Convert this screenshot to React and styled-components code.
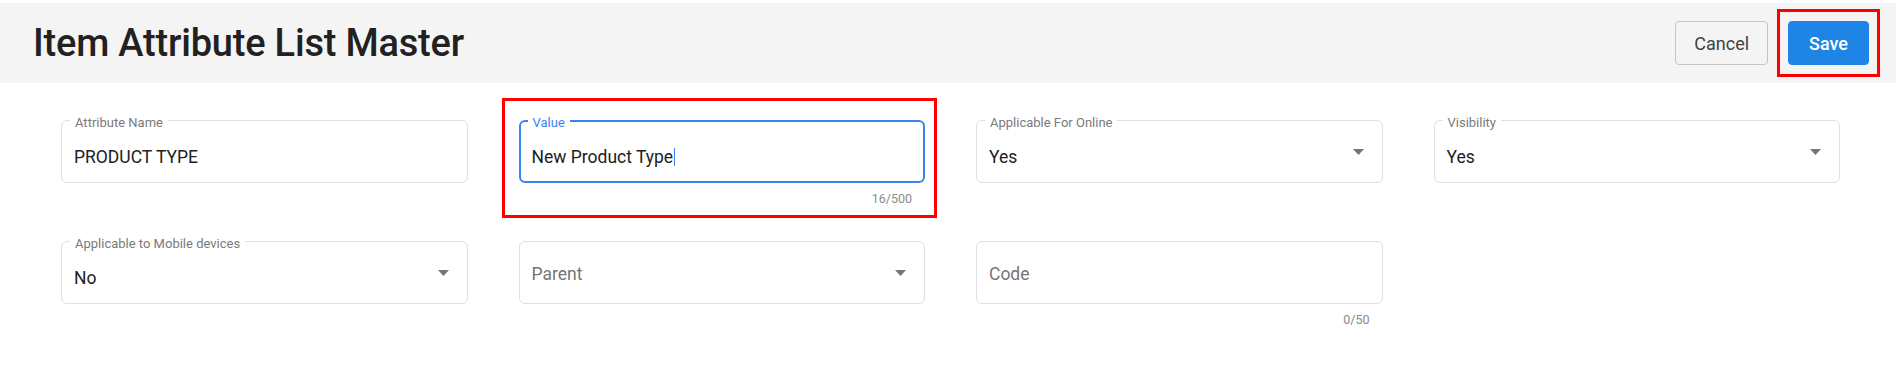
import React from "react";
import styled, { createGlobalStyle, css } from "styled-components";

const GlobalStyle = createGlobalStyle`
  body {
    margin: 0;
    background: #ffffff;
    font-family: Roboto, "Liberation Sans", sans-serif;
    color: #212121;
  }
`;

const Page = styled.div`
  padding-top: 3px;
`;

const Header = styled.header`
  height: 80px;
  background-color: #f4f4f4;
  display: flex;
  align-items: center;
  justify-content: space-between;
  padding: 0 27px 0 33px;
`;

const Title = styled.h1`
  margin: 0;
  font-size: 38px;
  font-weight: 500;
  color: #212121;
  letter-spacing: -0.2px;
`;

const Actions = styled.div`
  display: flex;
  align-items: center;
  gap: 20px;
`;

const Button = styled.button`
  font-family: Roboto, "Liberation Sans", sans-serif;
  font-size: 18px;
  height: 44px;
  border-radius: 4px;
  cursor: pointer;
  ${(p) =>
    p.$primary
      ? css`
          background-color: #1e85e6;
          border: 1px solid #1e85e6;
          color: #ffffff;
          font-weight: 500;
          padding: 0 20px;
        `
      : css`
          background-color: #f4f4f4;
          border: 1px solid #c4c4c4;
          color: #424242;
          padding: 0 18px;
        `}
`;

const Marked = styled.div`
  position: relative;
  display: flex;
`;

const RedFrame = styled.div`
  position: absolute;
  top: ${(p) => p.$top}px;
  right: ${(p) => p.$right}px;
  bottom: ${(p) => p.$bottom}px;
  left: ${(p) => p.$left}px;
  border: 3px solid #ff0000;
  pointer-events: none;
`;

const Form = styled.div`
  display: grid;
  grid-template-columns: repeat(4, 1fr);
  column-gap: 51px;
  row-gap: 34px;
  padding: 37px 56px 0 61px;
`;

const Field = styled.div`
  position: relative;
`;

const Box = styled.div`
  position: relative;
  height: 63px;
  box-sizing: border-box;
  border-radius: 6px;
  display: flex;
  align-items: ${(p) => (p.$empty ? "center" : "flex-start")};
  border: 1px solid #e0e0e0;
  padding: ${(p) => (p.$empty ? "3px 13px 0 12px" : "26px 13px 0 12px")};
  ${(p) =>
    p.$focused &&
    css`
      border: 2px solid #3b82f6;
      padding: 25px 12px 0 11px;
    `}
`;

const Label = styled.span`
  position: absolute;
  top: ${(p) => (p.$focused ? -7 : -6)}px;
  left: ${(p) => (p.$focused ? 7 : 8)}px;
  padding: 0 5px;
  background: #ffffff;
  font-size: 13px;
  line-height: 15px;
  color: ${(p) => (p.$focused ? "#3b82f6" : "#7a7a7a")};
  white-space: nowrap;
`;

const Value = styled.span`
  flex: 1;
  font-size: 17.5px;
  line-height: 20px;
  color: ${(p) => (p.$placeholder ? "#757575" : "#212121")};
  white-space: nowrap;
`;

const Caret = styled.span`
  display: inline-block;
  width: 1px;
  height: 18px;
  margin-left: 1px;
  background: #3b82f6;
  vertical-align: -3px;
`;

const Arrow = styled.svg`
  width: 11px;
  height: 6px;
  margin-right: 5px;
  align-self: center;
  margin-top: ${(p) => (p.$empty ? "-3px" : "-26px")};
  fill: #757575;
  flex-shrink: 0;
`;

const Helper = styled.div`
  height: 24px;
  box-sizing: border-box;
  padding: 8px 13px 0 0;
  text-align: right;
  font-size: 12.5px;
  line-height: 16px;
  color: #8a8a8a;
`;

function DropArrow({ empty }) {
  return (
    <Arrow viewBox="0 0 11 6" $empty={empty}>
      <polygon points="0,0 11,0 5.5,6" />
    </Arrow>
  );
}

function TextField({ label, value, focused, max }) {
  const empty = !value;
  return (
    <Field>
      <Box $focused={focused} $empty={empty}>
        {!empty && <Label $focused={focused}>{label}</Label>}
        <Value $placeholder={empty}>
          {empty ? label : value}
          {focused && <Caret />}
        </Value>
      </Box>
      {max && (
        <Helper>
          {(value || "").length}/{max}
        </Helper>
      )}
    </Field>
  );
}

function SelectField({ label, value }) {
  const empty = !value;
  return (
    <Field>
      <Box $empty={empty}>
        {!empty && <Label>{label}</Label>}
        <Value $placeholder={empty}>{empty ? label : value}</Value>
        <DropArrow empty={empty} />
      </Box>
    </Field>
  );
}

export default function App() {
  return (
    <Page>
      <GlobalStyle />
      <Header>
        <Title>Item Attribute List Master</Title>
        <Actions>
          <Button>Cancel</Button>
          <Marked>
            <Button $primary>Save</Button>
            <RedFrame $top={-12} $right={-11} $bottom={-12} $left={-11} />
          </Marked>
        </Actions>
      </Header>
      <Form>
        <TextField label="Attribute Name" value="PRODUCT TYPE" />
        <Field>
          <TextField label="Value" value="New Product Type" focused max={500} />
          <RedFrame $top={-22} $right={-12} $bottom={-11} $left={-17} />
        </Field>
        <SelectField label="Applicable For Online" value="Yes" />
        <SelectField label="Visibility" value="Yes" />
        <SelectField label="Applicable to Mobile devices" value="No" />
        <SelectField label="Parent" />
        <TextField label="Code" max={50} />
      </Form>
    </Page>
  );
}
